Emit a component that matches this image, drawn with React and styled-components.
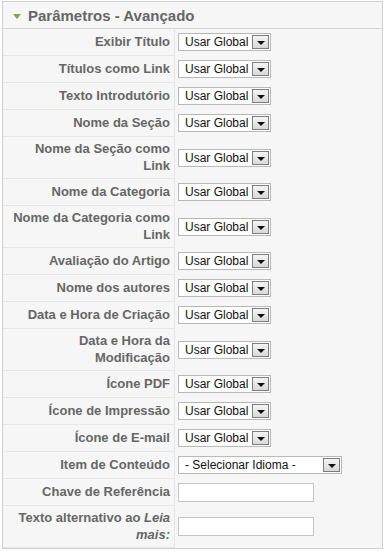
import React from "react";
import styled, { createGlobalStyle } from "styled-components";

const Global = createGlobalStyle`
  html, body { margin: 0; padding: 0; background: #fff; }
  body { font-family: "Liberation Sans", Arial, sans-serif; }
  * { box-sizing: border-box; }
`;

const Panel = styled.div`
  margin: 1px 2px 0 2px;
  border: 1px solid #cfcfcf;
  background: #f6f6f6;
`;

const Header = styled.h3`
  margin: 0;
  display: flex;
  align-items: center;
  gap: 7px;
  height: 27px;
  padding: 1px 0 0 10px;
  border-bottom: 1px solid #d2d2d2;
  font-size: 15px;
  font-weight: bold;
  color: #666;
`;

const Arrow = styled.span`
  width: 0;
  height: 0;
  border-left: 4px solid transparent;
  border-right: 4px solid transparent;
  border-top: 5px solid #78ad4a;
  margin-top: 1px;
`;

const Row = styled.div`
  display: grid;
  grid-template-columns: 172px 1fr;
`;

const Key = styled.div`
  display: flex;
  align-items: center;
  justify-content: flex-end;
  text-align: right;
  min-height: ${p => (p.$double ? 42 : 27)}px;
  padding: 4px 4px 4px 4px;
  border-bottom: 1px solid #e6e6e6;
  border-right: 1px solid #e6e6e6;
  font-size: 13px;
  line-height: 16.5px;
  font-weight: bold;
  color: #666;
`;

const Value = styled.div`
  display: flex;
  align-items: center;
  padding: 0 0 1px 3px;
`;

const SelectBox = styled.div`
  display: flex;
  align-items: center;
  width: ${p => p.$w}px;
  height: 18px;
  background: #fff;
  border: 1px solid #b9b9b9;
  padding: 1px;
`;

const SelectText = styled.span`
  flex: 1;
  padding-left: 5px;
  font-size: 12px;
  color: #111;
  white-space: nowrap;
  overflow: hidden;
`;

const DropButton = styled.span`
  display: flex;
  align-items: center;
  justify-content: center;
  width: 17px;
  height: 14px;
  border: 1px solid #7d7d7d;
  background: linear-gradient(#f4f4f4, #d9d9d9);
`;

const Tri = styled.span`
  width: 0;
  height: 0;
  border-left: 4px solid transparent;
  border-right: 4px solid transparent;
  border-top: 4px solid #111;
  margin-top: 2px;
`;

const TextInput = styled.div`
  width: 136px;
  height: 19px;
  background: #fff;
  border: 1px solid #c6c6c6;
`;

const Select = ({ w, children }) => (
  <SelectBox $w={w}>
    <SelectText>{children}</SelectText>
    <DropButton>
      <Tri />
    </DropButton>
  </SelectBox>
);

const rows = [
  { label: "Exibir Título" },
  { label: "Títulos como Link" },
  { label: "Texto Introdutório" },
  { label: "Nome da Seção" },
  { label: "Nome da Seção como Link", double: true },
  { label: "Nome da Categoria" },
  { label: "Nome da Categoria como Link", double: true },
  { label: "Avaliação do Artigo" },
  { label: "Nome dos autores" },
  { label: "Data e Hora de Criação" },
  { label: "Data e Hora da Modificação", double: true },
  { label: "Ícone PDF" },
  { label: "Ícone de Impressão" },
  { label: "Ícone de E-mail" },
  { label: "Item de Conteúdo", kind: "lang" },
  { label: "Chave de Referência", kind: "input" },
  {
    label: (
      <>
        Texto alternativo ao <i>Leia mais:</i>
      </>
    ),
    double: true,
    kind: "input",
  },
];

export default function App() {
  return (
    <>
      <Global />
      <Panel>
        <Header>
          <Arrow />
          Parâmetros - Avançado
        </Header>
        {rows.map((r, i) => (
          <Row key={i}>
            <Key $double={r.double}>
              <span>{r.label}</span>
            </Key>
            <Value>
              {r.kind === "lang" ? (
                <Select w={164}>- Selecionar Idioma -</Select>
              ) : r.kind === "input" ? (
                <TextInput />
              ) : (
                <Select w={93}>Usar Global</Select>
              )}
            </Value>
          </Row>
        ))}
      </Panel>
    </>
  );
}
